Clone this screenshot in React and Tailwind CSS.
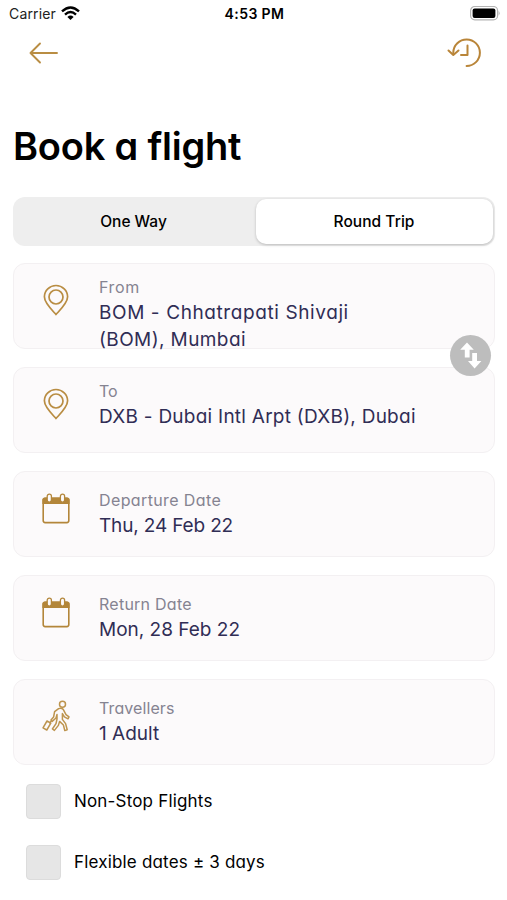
import React, { useState } from 'react'

function PinIcon() {
  return (
    <svg width="26" height="32" viewBox="0 0 26 32" fill="none" stroke="#b98d43" strokeWidth="1.7">
      <path d="M13 30.5 C9 26 1.4 19 1.4 12.8 A11.6 11.3 0 0 1 24.6 12.8 C24.6 19 17 26 13 30.5 Z" strokeLinejoin="round" />
      <circle cx="13" cy="13" r="7" />
    </svg>
  )
}

function CalendarIcon() {
  return (
    <svg width="28" height="31" viewBox="0 0 28 31">
      <path d="M0.4 7 Q0.4 4.5 3 4.5 H25 Q27.6 4.5 27.6 7 V11 H0.4 Z" fill="#b3863a" />
      <rect x="1.2" y="5.2" width="25.6" height="24.4" rx="2" fill="none" stroke="#b3863a" strokeWidth="1.6" />
      <rect x="5.2" y="1.2" width="4.2" height="8" rx="2.1" fill="#fcfafb" stroke="#b3863a" strokeWidth="1.3" />
      <rect x="18.4" y="1.2" width="4.2" height="8" rx="2.1" fill="#fcfafb" stroke="#b3863a" strokeWidth="1.3" />
    </svg>
  )
}

function TravellerIcon() {
  return (
    <svg width="28" height="32" viewBox="0 0 28 32" fill="none" stroke="#bd944e" strokeWidth="1.5" strokeLinejoin="round" strokeLinecap="round">
      <circle cx="20.5" cy="4.2" r="3" />
      <path d="M16.6 8.6 L12.6 11.6 L11.6 17 L9 20 L10.2 21.4 L14 18 L15 14.4 L15 19 L14 23.6 L10.4 29 L12.4 30.4 L16.4 25.4 L17.6 21.4 L21.4 25 L22.8 30.6 L25.2 29.8 L23.6 23.6 L20.4 19.4 L20.4 13.6 L22.4 16.8 L26 18.8 L27 16.8 L24 14.6 L21.2 9.4 Q19.2 7.4 16.6 8.6 Z" />
      <path d="M9.6 20.8 L7.6 22.8" />
      <path d="M5 21 L8.8 23.2 L4.8 30 L1 27.8 Z" />
    </svg>
  )
}

function SwapIcon() {
  return (
    <svg width="24" height="28" viewBox="0 0 24 28" fill="#fff">
      <path d="M8 0.6 L14.8 7.8 H10.6 V15.6 H5.8 V7.8 H1.2 Z" />
      <path d="M13.2 11 H18 V19 H22.4 L15.6 26.4 L9 19 H13.2 Z" />
    </svg>
  )
}

function Field({ icon, iconTop, label, labelStyle, lines, textTop }) {
  return (
    <div className="flex h-[86px] w-full rounded-xl border border-[#f3f0f2] bg-[#fcfafb]">
      <div className={`flex w-[85px] shrink-0 justify-center pr-0.5 ${iconTop}`}>{icon}</div>
      <div className={`whitespace-nowrap text-[#302d55] ${textTop}`}>
        <p className={`mb-px text-base leading-[22px] text-[#858391] ${labelStyle}`}>{label}</p>
        {lines.map((line) => (
          <p key={line.text} className={`text-[19px] leading-[27px] ${line.style}`}>{line.text}</p>
        ))}
      </div>
    </div>
  )
}

export default function App() {
  const [trip, setTrip] = useState('Round Trip')
  const [options, setOptions] = useState([])

  const toggleOption = (name) => {
    setOptions(options.includes(name) ? options.filter((o) => o !== name) : [...options, name])
  }

  return (
    <div className="h-[900px] w-[507px] overflow-hidden bg-white font-['Inter',sans-serif] text-black">
      <div className="grid h-[27px] grid-cols-3 items-center pl-[9px] pr-[7px]">
        <div className="flex items-center gap-[5px]">
          <span className="text-[14px] tracking-[0.15px] text-[#222]">Carrier</span>
          <svg width="19" height="15" viewBox="0 0 19 15" fill="none" stroke="#000" strokeWidth="2.4">
            <path d="M1 5.4 Q9.5 -2.4 18 5.4" />
            <path d="M4 8.6 Q9.5 3.6 15 8.6" />
            <path d="M9.5 14 L6.4 10.9 Q9.5 8.2 12.6 10.9 Z" fill="#000" stroke="none" />
          </svg>
        </div>
        <span className="text-center text-[14px] font-semibold tracking-[0.4px]">4:53 PM</span>
        <svg className="justify-self-end" width="31" height="15" viewBox="0 0 31 15">
          <rect x="1.6" y="0.5" width="27" height="13.4" rx="4.2" fill="#fff" stroke="#b4b4b4" strokeWidth="1.2" />
          <rect x="3.6" y="2.4" width="22.8" height="9.6" rx="2" />
          <path d="M29.6 4.8 Q31.6 7.2 29.6 9.6 Z" fill="#b4b4b4" />
        </svg>
      </div>

      <div className="flex h-[52px] items-center justify-between pl-[29px] pr-[25px]">
        <svg width="30" height="22" viewBox="0 0 30 22" fill="none" stroke="#b98d43" strokeWidth="1.9" strokeLinecap="round" strokeLinejoin="round">
          <path d="M28 11 H1.5 M11 1.5 L1.5 11 L11 20.5" />
        </svg>
        <svg width="35" height="30" viewBox="0 0 35 30" fill="none" stroke="#b98539" strokeWidth="2" strokeLinecap="round" strokeLinejoin="round">
          <path d="M6.3 16 V14.5 A13.3 13.3 0 1 1 19.6 28" />
          <path d="M1.5 12.5 L6.3 17 L11.5 12.5" />
          <path d="M20.5 7.5 V17 H14" />
        </svg>
      </div>

      <main className="pl-[13px] pr-3">
        <h1 className="mt-[41px] h-[52px] whitespace-nowrap text-[38px] font-semibold leading-[52px] tracking-[-0.2px] [font-feature-settings:'cv11']">
          Book a flight
        </h1>

        <div className="mt-[25px] flex h-[49px] rounded-xl bg-[#eeeeee] p-0.5">
          {['One Way', 'Round Trip'].map((name, i) => (
            <button
              key={name}
              onClick={() => setTrip(name)}
              className={`h-[45px] rounded-[10px] text-[15.5px] font-medium ${i === 0 ? 'w-[241px] pr-1' : 'w-[237px] pr-px tracking-[0.05px]'} ${trip === name ? 'bg-white shadow-[0_1px_3px_rgba(0,0,0,0.22)]' : ''}`}
            >
              {name}
            </button>
          ))}
        </div>

        <div className="relative mt-[17px] flex flex-col gap-[18px] [font-feature-settings:'cv11']">
          <Field
            icon={<PinIcon />}
            iconTop="pt-5"
            label="From"
            labelStyle="tracking-[0.6px]"
            textTop="pt-3"
            lines={[
              { text: 'BOM - Chhatrapati Shivaji', style: 'tracking-[0.6px]' },
              { text: '(BOM), Mumbai', style: 'tracking-[0.4px]' },
            ]}
          />
          <Field
            icon={<PinIcon />}
            iconTop="pt-5"
            label="To"
            labelStyle=""
            textTop="pt-3"
            lines={[{ text: 'DXB - Dubai Intl Arpt (DXB), Dubai', style: 'tracking-[0.25px]' }]}
          />
          <Field
            icon={<CalendarIcon />}
            iconTop="pt-[21px]"
            label="Departure Date"
            labelStyle="tracking-[0.38px]"
            textTop="pt-[17px]"
            lines={[{ text: 'Thu, 24 Feb 22', style: 'tracking-[-0.15px]' }]}
          />
          <Field
            icon={<CalendarIcon />}
            iconTop="pt-[21px]"
            label="Return Date"
            labelStyle="tracking-[0.25px]"
            textTop="pt-[17px]"
            lines={[{ text: 'Mon, 28 Feb 22', style: '' }]}
          />
          <Field
            icon={<TravellerIcon />}
            iconTop="pt-5"
            label="Travellers"
            labelStyle="tracking-[0.1px]"
            textTop="pt-[17px]"
            lines={[{ text: '1 Adult', style: '' }]}
          />
          <button className="absolute right-1 top-[72px] flex h-[41px] w-[41px] items-center justify-center rounded-full bg-[#bdbdbd]">
            <SwapIcon />
          </button>
        </div>

        <div className="mt-[19px] flex flex-col gap-[26px] pl-[13px] [font-feature-settings:'cv11']">
          {['Non-Stop Flights', 'Flexible dates ± 3 days'].map((name) => (
            <button key={name} onClick={() => toggleOption(name)} className="flex h-[35px] items-center gap-[13px] whitespace-nowrap">
              <span className={`h-[35px] w-[35px] rounded border border-[#dcdcdc] ${options.includes(name) ? 'bg-[#b98d43]' : 'bg-[#e6e6e6]'}`} />
              <span className="text-[17px] tracking-[0.18px]">{name}</span>
            </button>
          ))}
        </div>
      </main>
    </div>
  )
}
